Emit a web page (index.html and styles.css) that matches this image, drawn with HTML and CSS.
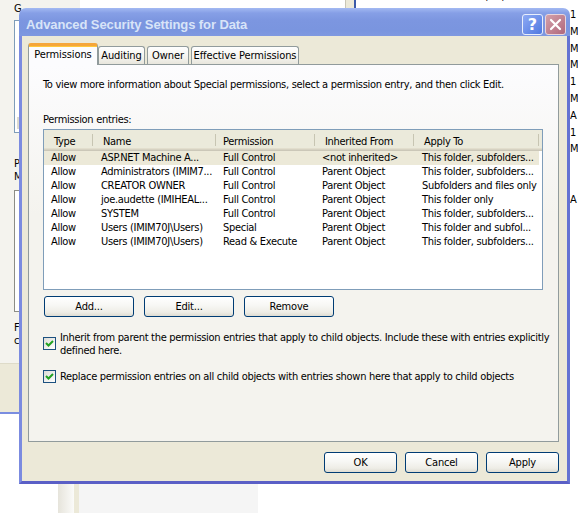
FILE: index.html
```html
<html><head><link rel="stylesheet" href="styles.css"></head><body>
<div class="desk">
  <div class="win-left">
    <span class="lbl lbl-g">G</span>
    <div class="box box1"><span class="thumb"></span></div>
    <span class="lbl lbl-p">P<br>M</span>
    <div class="box box2"></div>
    <span class="lbl lbl-f">F<br>c</span>
    <div class="win-left-foot"></div>
  </div>
  <div class="win-right">
    <div class="wr-scroll"></div>
    <div class="wr-list">
      <div class="wr-row"><span class="wr-name">Folder</span><span class="wr-date">9/30/2008 3:00 PM</span></div>
    </div>
  </div>
  <div class="win-edge">1
M
M
M
1
M
A
1
M


A</div>
  <div class="win-bottom"><span class="wb-grad"></span><span class="wb-beige"></span><span class="wb-gray"></span></div>

  <div class="dialog">
    <div class="titlebar">
      <span class="title">Advanced Security Settings for Data</span>
      <div class="tb-btns">
        <span class="tb help">?</span>
        <span class="tb close"><svg width="13" height="13" viewBox="0 0 13 13"><path d="M2 2L11 11M11 2L2 11" stroke="#fff" stroke-width="2.2" stroke-linecap="round"/></svg></span>
      </div>
    </div>
    <div class="body">
      <div class="tabs">
        <span class="tab sel">Permissions</span>
        <span class="tab w-aud">Auditing</span>
        <span class="tab w-own">Owner</span>
        <span class="tab w-eff">Effective Permissions</span>
      </div>
      <div class="panel">
        <p class="intro">To view more information about Special permissions, select a permission entry, and then click Edit.</p>
        <p class="label">Permission entries:</p>
        <div class="list">
          <table>
            <thead>
              <tr><th>Type</th><th>Name</th><th class="th-perm">Permission</th><th>Inherited From</th><th>Apply To</th><th class="fill"></th></tr>
            </thead>
            <tbody>
              <tr class="selected"><td>Allow</td><td>ASP.NET Machine A...</td><td>Full Control</td><td>&lt;not inherited&gt;</td><td>This folder, subfolders...</td><td></td></tr>
              <tr><td>Allow</td><td>Administrators (IMIM7...</td><td>Full Control</td><td>Parent Object</td><td>This folder, subfolders...</td><td></td></tr>
              <tr><td>Allow</td><td>CREATOR OWNER</td><td>Full Control</td><td>Parent Object</td><td>Subfolders and files only</td><td></td></tr>
              <tr><td>Allow</td><td>joe.audette (IMIHEAL...</td><td>Full Control</td><td>Parent Object</td><td>This folder only</td><td></td></tr>
              <tr><td>Allow</td><td>SYSTEM</td><td>Full Control</td><td>Parent Object</td><td>This folder, subfolders...</td><td></td></tr>
              <tr><td>Allow</td><td>Users (IMIM70J\Users)</td><td>Special</td><td>Parent Object</td><td>This folder and subfol...</td><td></td></tr>
              <tr><td>Allow</td><td>Users (IMIM70J\Users)</td><td>Read &amp; Execute</td><td>Parent Object</td><td>This folder, subfolders...</td><td></td></tr>
            </tbody>
          </table>
        </div>
        <div class="list-btns">
          <button class="btn">Add...</button>
          <button class="btn">Edit...</button>
          <button class="btn">Remove</button>
        </div>
        <label class="check check1">
          <span class="cb"><svg width="11" height="11" viewBox="0 0 11 11"><polyline points="2,5 4.5,7.5 9,3" fill="none" stroke="#21a121" stroke-width="2"/></svg></span>
          <span>Inherit from parent the permission entries that apply to child objects. Include these with entries explicitly<br>defined here.</span>
        </label>
        <label class="check check2">
          <span class="cb"><svg width="11" height="11" viewBox="0 0 11 11"><polyline points="2,5 4.5,7.5 9,3" fill="none" stroke="#21a121" stroke-width="2"/></svg></span>
          <span>Replace permission entries on all child objects with entries shown here that apply to child objects</span>
        </label>
      </div>
      <div class="footer">
        <button class="btn">OK</button>
        <button class="btn">Cancel</button>
        <button class="btn">Apply</button>
      </div>
    </div>
  </div>
</div>
</body></html>
```

FILE: styles.css
```css
body{margin:0;background:#fff;font-family:"DejaVu Sans Condensed","Liberation Sans",Arial,sans-serif;font-size:11px;color:#000;}
.desk{position:relative;width:578px;height:513px;overflow:hidden;background:#fff;}

/* windows behind the dialog */
.win-left{position:absolute;left:0;top:0;width:80px;height:412px;background:#f4f3ee;border-bottom:2px solid #7a8de0;}
.lbl{position:absolute;left:14px;line-height:13px;}
.lbl-g{top:2px;}
.lbl-p{top:157px;}
.lbl-f{top:321px;}
.box{position:absolute;left:14px;width:60px;background:#fff;border:1px solid #7f9db9;}
.box1{top:20px;height:111px;}
.box1 .thumb{position:absolute;left:2px;top:96px;width:5px;height:12px;background:#dcdad0;}
.box2{top:190px;height:120px;border-color:#8d8d86;}
.win-left-foot{position:absolute;left:0;right:0;top:363px;bottom:0;background:#ece9d8;border-top:1px solid #dedbc9;}
.win-right{position:absolute;left:345px;top:-10px;width:240px;height:300px;display:flex;background:#fff;}
.wr-scroll{width:8px;background:#ece9d8;border-left:1px solid #c9c6b6;border-right:2px solid #3b5aa8;}
.wr-list{flex:1;}
.wr-row{display:flex;height:13px;line-height:13px;padding-left:6px;}
.wr-name{width:118px;}
.win-edge{position:absolute;left:570px;top:7px;white-space:pre;line-height:16.8px;}
.win-bottom{position:absolute;left:58px;top:484px;height:29px;display:flex;}
.wb-grad{width:16px;background:linear-gradient(90deg,#e6e4db,#fbfbf9);}
.wb-beige{width:5px;background:#ece9d8;}
.wb-gray{width:179px;background:#f5f5f5;}

/* dialog */
.dialog{position:absolute;left:19px;top:8px;width:551px;height:476px;display:flex;flex-direction:column;}
.titlebar{height:28px;border-radius:7px 7px 0 0;background:linear-gradient(#a3b9f2,#869fe6 18%,#7c96e0 45%,#7a95df 80%,#7f98e0);display:flex;align-items:center;justify-content:space-between;padding:0 4px 0 7px;}
.title{font-family:"Liberation Sans",Arial,sans-serif;font-weight:bold;font-size:13px;color:#d8e4f8;padding-top:4px;letter-spacing:-0.1px;}
.tb-btns{display:flex;gap:2px;padding-top:4px;}
.tb{width:19px;height:19px;border:1px solid #e8eefc;border-radius:3px;display:flex;align-items:center;justify-content:center;}
.help{background:linear-gradient(135deg,#8eaaf4,#4f78e0);color:#fff;font-weight:bold;font-size:16px;font-family:"DejaVu Sans",sans-serif;}
.close{background:linear-gradient(135deg,#d3a0aa,#b0687c);border-color:#e9d5dc;}
.body{flex:1;background:#ece9d8;border:3px solid #7b8be0;border-top:0;border-right-color:#6473d2;border-bottom-color:#5a5fc6;padding:7px 8px 0 6px;display:flex;flex-direction:column;letter-spacing:-0.3px;}

.tabs{display:flex;align-items:flex-end;gap:2px;height:21px;position:relative;z-index:1;letter-spacing:-0.1px;}
.tab{box-sizing:border-box;height:18px;line-height:17px;text-align:center;border:1px solid #919b9c;border-bottom:0;border-radius:3px 3px 0 0;background:linear-gradient(#fefefe,#f4f3ee 60%,#e8e6dd);white-space:nowrap;}
.tab.sel{width:70px;height:22px;margin-bottom:-1px;margin-right:-2px;line-height:17px;background:#fcfcfe;border-top:3px solid #f5a63a;box-shadow:inset 0 1px #ffc83c;}
.w-aud{width:47px;}
.w-own{width:42px;}
.w-eff{width:108px;}

.panel{box-sizing:border-box;height:378px;border:1px solid #919b9c;background:linear-gradient(#fcfcfe,#f4f3ee 40%,#f4f3ee);padding:13px 0 0 14px;}
.intro,.label{margin:0;line-height:13px;white-space:nowrap;}
.label{margin-top:22px;}
.list{box-sizing:border-box;width:500px;height:161px;margin-top:3px;border:1px solid #7f9db9;background:#fff;overflow:hidden;}
.list table{border-collapse:collapse;table-layout:fixed;width:498px;font-size:11px;letter-spacing:-0.3px;font-family:"DejaVu Sans Condensed","Liberation Sans",Arial,sans-serif;}
.list th{height:21px;padding:1px 0 0 10px;text-align:left;font-weight:normal;background:#ebeadb;box-shadow:inset 0 -1px #cbc7b8,inset 0 -2px #d6d2c2,inset 0 -3px #e2decd;white-space:nowrap;position:relative;}
.list th:after{content:"";position:absolute;right:0;top:4px;bottom:5px;width:1px;background:#c7c5b2;box-shadow:1px 0 #fff;}
.list th.fill:after{display:none;}
.list th.th-perm{padding-left:7px;}
.list th:nth-child(1){width:39px;}
.list th:nth-child(2){width:113px;}
.list th:nth-child(3){width:92px;}
.list th:nth-child(4){width:89px;}
.list th:nth-child(5){width:115px;}
.list td{height:14px;line-height:14px;padding:0 0 0 7px;white-space:nowrap;overflow:hidden;}
.list td:nth-child(2),.list td:nth-child(5){padding-left:8px;}
.list tr.selected td{background:#ece9d8;}
.list tr.selected td:last-child{background:#fff;}

.btn{box-sizing:border-box;height:21px;padding:0;font-family:"DejaVu Sans Condensed","Liberation Sans",Arial,sans-serif;font-size:11px;letter-spacing:-0.2px;color:#000;border:1px solid #003c74;border-radius:3px;background:linear-gradient(#ffffff,#f7f7f4 45%,#eeede6 80%,#dedcd2);}
.list-btns{display:flex;gap:10px;margin:6px 0 0 1px;}
.list-btns .btn{width:90px;}
.check{display:flex;align-items:center;gap:4px;line-height:13px;white-space:nowrap;}
.check1{margin-top:14px;}
.check2{margin-top:13px;}
.cb{box-sizing:border-box;width:13px;height:13px;flex:none;border:1px solid #1c5180;background:linear-gradient(135deg,#dcdcd7,#fff);display:flex;align-items:center;justify-content:center;}
.check1 .cb{margin-top:-2px;}

.footer{display:flex;justify-content:flex-end;gap:8px;margin-top:10px;}
.footer .btn{width:73px;}
```
